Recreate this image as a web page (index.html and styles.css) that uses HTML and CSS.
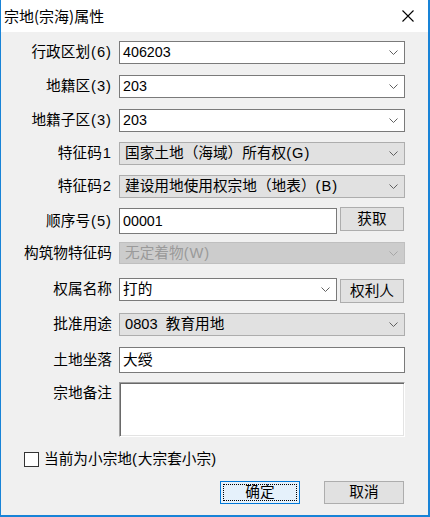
FILE: index.html
```html
<!DOCTYPE html>
<html lang="zh">
<head>
<meta charset="utf-8">
<title>宗地(宗海)属性</title>
<link rel="stylesheet" href="styles.css">
</head>
<body>
<div class="window">
  <div class="titlebar">
    <span class="title">宗地(宗海)属性</span>
    <svg class="close" width="12" height="12" viewBox="0 0 12 12"><path d="M0.5 0.5 L11.5 11.5 M11.5 0.5 L0.5 11.5" stroke="#000" stroke-width="1.1" fill="none"/></svg>
  </div>
  <div class="client">
    <div class="row r1 h23">
      <span class="label">行政区划<span class="half">(6)</span></span>
      <div class="field combo wide"><span class="val num">406203</span><svg class="chev" width="9" height="5" viewBox="0 0 9 5"><polyline points="0.5,0.5 4.5,4.5 8.5,0.5" fill="none" stroke="#606060"/></svg></div>
    </div>
    <div class="row r11 h23">
      <span class="label">地籍区<span class="half">(3)</span></span>
      <div class="field combo wide"><span class="val num">203</span><svg class="chev" width="9" height="5" viewBox="0 0 9 5"><polyline points="0.5,0.5 4.5,4.5 8.5,0.5" fill="none" stroke="#606060"/></svg></div>
    </div>
    <div class="row r11 h23">
      <span class="label">地籍子区<span class="half">(3)</span></span>
      <div class="field combo wide"><span class="val num">203</span><svg class="chev" width="9" height="5" viewBox="0 0 9 5"><polyline points="0.5,0.5 4.5,4.5 8.5,0.5" fill="none" stroke="#606060"/></svg></div>
    </div>
    <div class="row r10 h23">
      <span class="label">特征码<span class="half">1</span></span>
      <div class="field list wide"><span class="val">国家土地（海域）所有权<span class="half">(G)</span></span><svg class="chev" width="9" height="5" viewBox="0 0 9 5"><polyline points="0.5,0.5 4.5,4.5 8.5,0.5" fill="none" stroke="#606060"/></svg></div>
    </div>
    <div class="row r10 h23">
      <span class="label">特征码<span class="half">2</span></span>
      <div class="field list wide"><span class="val">建设用地使用权宗地（地表）<span class="half">(B)</span></span><svg class="chev" width="9" height="5" viewBox="0 0 9 5"><polyline points="0.5,0.5 4.5,4.5 8.5,0.5" fill="none" stroke="#606060"/></svg></div>
    </div>
    <div class="row r10 h26">
      <span class="label">顺序号<span class="half">(5)</span></span>
      <div class="field text narrow"><span class="val num">00001</span></div>
      <button class="btn side up">获取</button>
    </div>
    <div class="row r8 h22">
      <span class="label">构筑物特征码</span>
      <div class="field disabled wide"><span class="val">无定着物<span class="half">(W)</span></span><svg class="chev" width="9" height="5" viewBox="0 0 9 5"><polyline points="0.5,0.5 4.5,4.5 8.5,0.5" fill="none" stroke="#a6a6a6"/></svg></div>
    </div>
    <div class="row r14 h23">
      <span class="label">权属名称</span>
      <div class="field combo narrow"><span class="val">打的</span><svg class="chev" width="9" height="5" viewBox="0 0 9 5"><polyline points="0.5,0.5 4.5,4.5 8.5,0.5" fill="none" stroke="#606060"/></svg></div>
      <button class="btn side down">权利人</button>
    </div>
    <div class="row r12 h23">
      <span class="label">批准用途</span>
      <div class="field list wide"><span class="val pre">0803  教育用地</span><svg class="chev" width="9" height="5" viewBox="0 0 9 5"><polyline points="0.5,0.5 4.5,4.5 8.5,0.5" fill="none" stroke="#606060"/></svg></div>
    </div>
    <div class="row r11 h26">
      <span class="label">土地坐落</span>
      <div class="field text wide"><span class="val">大绶</span></div>
    </div>
    <div class="row r9 h55 top">
      <span class="label lbl-top">宗地备注</span>
      <div class="memo wide"></div>
    </div>
    <div class="check-row">
      <span class="checkbox"></span>
      <span class="check-label">当前为小宗地<span class="half">(</span>大宗套小宗<span class="half">)</span></span>
    </div>
    <div class="actions">
      <button class="btn action primary"><span class="focus">确定</span></button>
      <button class="btn action">取消</button>
    </div>
  </div>
</div>
</body>
</html>
```

FILE: styles.css
```css
* { box-sizing: border-box; }
html, body { margin: 0; padding: 0; }
body {
  width: 430px;
  height: 517px;
  overflow: hidden;
  background: #f0f0f0;
  font-family: "Liberation Sans", "Noto Sans CJK SC", sans-serif;
  font-size: 14.67px;
  color: #000;
}
.window {
  width: 430px;
  height: 517px;
  display: flex;
  flex-direction: column;
  border-left: 1px solid #1883d7;
  border-right: 2px solid #1883d7;
  border-bottom: 2px solid #1883d7;
  background: #f0f0f0;
}
.titlebar {
  height: 32px;
  flex: none;
  background: #fff;
  display: flex;
  align-items: center;
  justify-content: space-between;
  padding: 0 14px 0 3px;
}
.title {
  font-family: "Noto Sans CJK SC", sans-serif;
  font-size: 15px;
  line-height: 1;
  margin-top: -1px;
  color: #000;
}
.close { display: block; }
.client {
  flex: 1;
  display: flex;
  flex-direction: column;
  padding: 9px 23px 0 9px;
}
.row {
  display: flex;
  align-items: center;
}
.r8 { margin-top: 8px; }
.r9 { margin-top: 9px; }
.r10 { margin-top: 10px; }
.r11 { margin-top: 11px; }
.r12 { margin-top: 12px; }
.r14 { margin-top: 14px; }
.h22 { height: 22px; }
.h23 { height: 23px; }
.h26 { height: 26px; }
.h55 { height: 55px; }
.row.top { align-items: flex-start; }
.label {
  width: 102px;
  margin-right: 7px;
  text-align: right;
  white-space: nowrap;
  line-height: 1;
  flex: none;
  color: #000;
}
.half {
  letter-spacing: 1px;
}
.label .half { margin-left: 1px; }
.lbl-top { padding-top: 4px; }
.field {
  height: 100%;
  display: flex;
  align-items: center;
  justify-content: space-between;
  line-height: 1;
  white-space: nowrap;
  flex: none;
  color: #000;
}
.wide { width: 286px; }
.narrow { width: 218px; }
.combo {
  background: #fff;
  border: 1px solid #7a7a7a;
  padding: 0 6px 0 3px;
}
.list {
  background: #e1e1e1;
  border: 1px solid #adadad;
  padding: 0 6px 0 5px;
}
.disabled {
  background: #cccccc;
  border: 1px solid #bfbfbf;
  color: #9a9a9a;
  padding: 0 6px 0 5px;
}
.text {
  background: #fff;
  border: 1px solid #7a7a7a;
  padding: 0 3px;
}
.val { display: block; }
.num { font-size: 14.3px; }
.pre { white-space: pre; }
.chev { display: block; flex: none; }
.btn {
  font-family: "Liberation Sans", "Noto Sans CJK SC", sans-serif;
  font-size: 14.67px;
  color: #000;
  background: #e1e1e1;
  border: 1px solid #adadad;
  border-radius: 0;
  padding: 0;
  margin: 0;
  line-height: 1;
  display: flex;
  align-items: center;
  justify-content: center;
}
.side {
  width: 64px;
  height: 24px;
  margin-left: 3px;
  align-self: flex-start;
}
.side.up { margin-top: -1px; }
.side.down { margin-top: 1px; }
.memo {
  height: 55px;
  background: #fff;
  border-top: 1px solid #a0a0a0;
  border-left: 1px solid #a0a0a0;
  border-right: 1px solid #ffffff;
  border-bottom: 1px solid #ffffff;
  box-shadow: inset 1px 1px 0 #696969, inset -1px -1px 0 #e3e3e3;
  flex: none;
}
.check-row {
  margin-top: 14px;
  margin-left: 14px;
  height: 16px;
  display: flex;
  align-items: center;
}
.checkbox {
  width: 15px;
  height: 15px;
  background: #fff;
  border: 1px solid #333;
  flex: none;
}
.check-label {
  margin-left: 5px;
  line-height: 1;
  white-space: nowrap;
  color: #000;
}
.actions {
  margin-top: 14px;
  display: flex;
  justify-content: flex-end;
  gap: 24px;
  padding-right: 1px;
}
.action {
  width: 80px;
  height: 23px;
}
.primary {
  background: #e5f1fb;
  border: 1px solid #0078d7;
  padding: 2px;
}
.focus {
  width: 100%;
  height: 100%;
  border: 1px dotted #000;
  display: flex;
  align-items: center;
  justify-content: center;
}
```
